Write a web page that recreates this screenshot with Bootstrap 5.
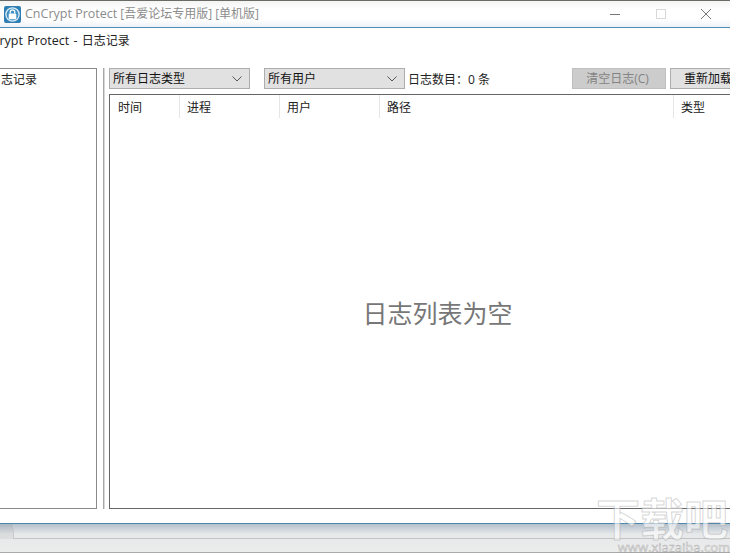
<!DOCTYPE html>
<html lang="zh-CN">
<head>
    <meta charset="UTF-8">
    <meta name="viewport" content="width=device-width, initial-scale=1.0">
    <title>CnCrypt Protect</title>
    <link href="https://cdn.jsdelivr.net/npm/bootstrap@5.3.0/dist/css/bootstrap.min.css" rel="stylesheet">
    <style>
        html, body { height: 553px; overflow: hidden; }
        body {
            width: 730px;
            font-family: "Open Sans", "Noto Sans CJK SC", sans-serif;
            font-size: 12px;
            line-height: 16px;
            color: #222;
            background: #fff;
        }
        #app { height: 553px; position: relative; overflow: hidden; }

        /* window title bar */
        .title-bar {
            height: 28px;
            flex: none;
            border-top: 1px solid #6b6b66;
            border-bottom: 1px solid #4d8fb8;
            background: linear-gradient(#f4f4f4, #fff 35%, #fff 70%, #eef2f5);
            color: #8c8c8c;
            font-size: 12px;
            padding-left: 4px;
        }
        .title-bar .app-name { margin-left: 4px; font-size: 12.5px; }
        .title-bar .app-tags { margin-left: 3px; }
        .win-btns { margin-left: auto; width: 120px; padding-right: 19px; }

        .page-path { height: 40px; flex: none; padding-top: 5px; margin-left: -24px; word-spacing: 1px; color: #222; font-size: 12.5px; line-height: 16px; }
        .page-path span { font-size: 12px; }

        /* body of the window */
        .work-area { height: 441px; flex: none; }
        .side-tree {
            width: 97px;
            flex: none;
            border: 1px solid #8a8a8a;
            border-left: 0;
            padding-top: 3px;
        }
        .side-tree span { margin-left: -11px; display: block; }
        .splitter { width: 12px; flex: none; }
        .splitter i { display: block; width: 2px; height: 100%; margin-left: 6px; border-left: 1px solid #a8a8a8; border-right: 1px solid #d8d8d8; }
        .log-pane { width: 660px; flex: none; }

        .tool-row { height: 26px; flex: none; }
        .filter-box {
            height: 21px;
            background: #e1e1e1;
            border: 1px solid #adadad;
            padding: 1px 7px 0 3px;
            color: #111;
        }
        .filter-type { width: 141px; }
        .filter-user { width: 141px; margin-left: 14px; }
        .log-count { margin-left: 3px; }
        .act-btn {
            height: 21px;
            width: 94px;
            flex: none;
            padding: 0;
            border-radius: 0;
            font-size: 12px;
            line-height: 18px;
            background: #e1e1e1;
            border: 1px solid #adadad;
            color: #111;
        }
        .act-btn:disabled { background: #ccc; border-color: #bfbfbf; color: #838383; opacity: 1; }
        .btn-clear { margin-left: auto; margin-right: 4px; padding-right: 3px; }
        .btn-reload { width: 76px; margin-right: 23px; }

        .log-list { flex: 1; border: 1px solid #666; border-right: 0; }
        .log-head { height: 24px; flex: none; color: #222; }
        .log-head > div { padding-left: 7px; padding-top: 1px; line-height: 23px; border-right: 1px solid #e6e6e6; height: 23px; }
        .col-time { width: 70px; padding-left: 8px !important; }
        .col-proc { width: 100px; }
        .col-user { width: 100px; }
        .col-path { width: 294px; }
        .col-kind { border-right: 0 !important; }
        .empty-msg { flex: 1; font-size: 25px; color: #777; padding-bottom: 2px; padding-right: 4px; }

        /* status bar */
        .status-bar {
            margin-top: 14px;
            flex: 1;
            border-top: 1px solid #4b86ad;
            border-bottom: 1px solid #a9a9a9;
            background: linear-gradient(#b4c0cb, #e6e8ea 10px, #ececec);
        }
        .status-grip { width: 13px; height: 15px; flex: none; background: rgba(0,0,0,.05); }
        .status-inner { height: 15px; border-bottom: 1px solid #c4c4c4; border-left: 1px solid #c9c9c9; flex: 1; }

        /* site watermark over the corner */
        .site-mark {
            position: absolute;
            right: 0;
            bottom: -1px;
            width: 136px;
            text-align: center;
            line-height: 1;
            color: rgba(255,255,255,.6);
            -webkit-text-stroke: 1px rgba(150,150,150,.4);
        }
        .site-mark b { display: block; font-size: 44px; font-weight: 700; height: 44px; line-height: 44px; }
        .site-mark span { display: block; font-size: 13px; line-height: 13px; text-align: right; -webkit-text-stroke: .5px rgba(130,130,130,.6); }
    </style>
</head>
<body>
    <div id="app" class="d-flex flex-column">
        <div class="title-bar d-flex align-items-center">
            <svg width="17" height="17" viewBox="0 0 18 18">
                <rect width="18" height="18" rx="2" fill="#2f7fb5"/>
                <circle cx="9" cy="9" r="7" fill="#3d8fc4" stroke="#dcecf6" stroke-width="1.4"/>
                <rect x="5" y="8" width="8" height="6" rx="1" fill="#fff"/>
                <path d="M6.6 8V6.4a2.4 2.4 0 0 1 4.8 0V8" fill="none" stroke="#fff" stroke-width="1.3"/>
            </svg>
            <span class="app-name">CnCrypt Protect</span>
            <span class="app-tags">[吾爱论坛专用版] [单机版]</span>
            <div class="win-btns d-flex align-items-center justify-content-between">
                <svg width="10" height="10" viewBox="0 0 10 10"><path d="M0 5.500h10" stroke="#777"/></svg>
                <svg width="10" height="10" viewBox="0 0 10 10"><rect x=".5" y=".5" width="9" height="9" fill="none" stroke="#d8d8d8"/></svg>
                <svg width="10" height="10" viewBox="0 0 10 10"><path d="M0 0l10 10M10 0L0 10" stroke="#777"/></svg>
            </div>
        </div>

        <div class="page-path text-nowrap">CnCrypt Protect - <span>日志记录</span></div>

        <div class="work-area d-flex">
            <div class="side-tree"><span>日志记录</span></div>
            <div class="splitter"><i></i></div>
            <div class="log-pane d-flex flex-column">
                <div class="tool-row d-flex">
                    <div class="filter-box filter-type d-flex align-items-center justify-content-between">
                        <span>所有日志类型</span>
                        <svg width="10" height="6" viewBox="0 0 10 6"><path d="M.5.5L5 5 9.500.5" fill="none" stroke="#555"/></svg>
                    </div>
                    <div class="filter-box filter-user d-flex align-items-center justify-content-between">
                        <span>所有用户</span>
                        <svg width="10" height="6" viewBox="0 0 10 6"><path d="M.5.5L5 5 9.500.5" fill="none" stroke="#555"/></svg>
                    </div>
                    <div class="log-count text-nowrap pt-1">日志数目：0 条</div>
                    <button class="btn act-btn btn-clear" disabled>清空日志(C)</button>
                    <button class="btn act-btn btn-reload">重新加载</button>
                </div>
                <div class="log-list d-flex flex-column">
                    <div class="log-head d-flex">
                        <div class="col-time">时间</div>
                        <div class="col-proc">进程</div>
                        <div class="col-user">用户</div>
                        <div class="col-path">路径</div>
                        <div class="col-kind">类型</div>
                    </div>
                    <div class="empty-msg d-flex align-items-center justify-content-center">日志列表为空</div>
                </div>
            </div>
        </div>

        <div class="status-bar d-flex">
            <div class="status-grip"></div>
            <div class="status-inner"></div>
        </div>

        <div class="site-mark"><b>下载吧</b><span>www.xiazaiba.com</span></div>
    </div>
    <script src="https://cdn.jsdelivr.net/npm/bootstrap@5.3.0/dist/js/bootstrap.bundle.min.js"></script>
</body>
</html>
